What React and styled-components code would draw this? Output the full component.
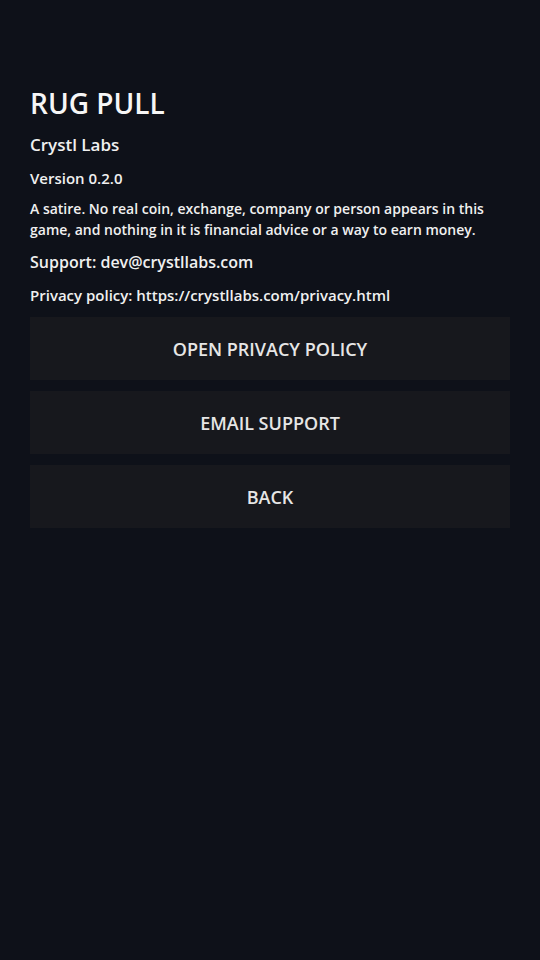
import React from "react";
import styled, { createGlobalStyle } from "styled-components";

const Global = createGlobalStyle`
  html, body { margin: 0; padding: 0; background: #0e1119; }
  body { font-family: "Open Sans", "Noto Sans", sans-serif; color: #f2f2f2; }
  * { box-sizing: border-box; }
`;

const Screen = styled.div`
  min-height: 960px;
  background: #0e1119;
  padding: 83px 30px 0 30px;
  display: flex;
  flex-direction: column;
`;

const Title = styled.h1`
  margin: 0;
  font-size: 28px;
  font-weight: 600;
  line-height: 40px;
  color: #f6f6f6;
`;

const Line = styled.p`
  margin: ${(p) => p.$mt || 0}px 0 0 0;
  font-size: ${(p) => p.$size}px;
  font-weight: 600;
  line-height: ${(p) => p.$lh}px;
  color: #f0f0f0;
`;

const Buttons = styled.div`
  margin-top: 11px;
  display: flex;
  flex-direction: column;
  gap: 11px;
`;

const Button = styled.button`
  height: 63px;
  width: 100%;
  border: none;
  border-radius: 0;
  background: #17181d;
  color: #e6e6e6;
  font-family: "Open Sans", "Noto Sans", sans-serif;
  font-size: 18px;
  font-weight: 600;
  cursor: pointer;
`;

export default function App() {
  return (
    <>
      <Global />
      <Screen>
        <Title>RUG PULL</Title>
        <Line $size={17} $lh={24} $mt={10}>Crystl Labs</Line>
        <Line $size={15} $lh={22} $mt={10}>Version 0.2.0</Line>
        <Line $size={14} $lh={21} $mt={9}>
          A satire. No real coin, exchange, company or person appears in this game, and nothing in it is financial advice or a way to earn money.
        </Line>
        <Line $size={16} $lh={24} $mt={10}>Support: dev@crystllabs.com</Line>
        <Line $size={15} $lh={22} $mt={10}>Privacy policy: https://crystllabs.com/privacy.html</Line>
        <Buttons>
          <Button>OPEN PRIVACY POLICY</Button>
          <Button>EMAIL SUPPORT</Button>
          <Button>BACK</Button>
        </Buttons>
      </Screen>
    </>
  );
}
